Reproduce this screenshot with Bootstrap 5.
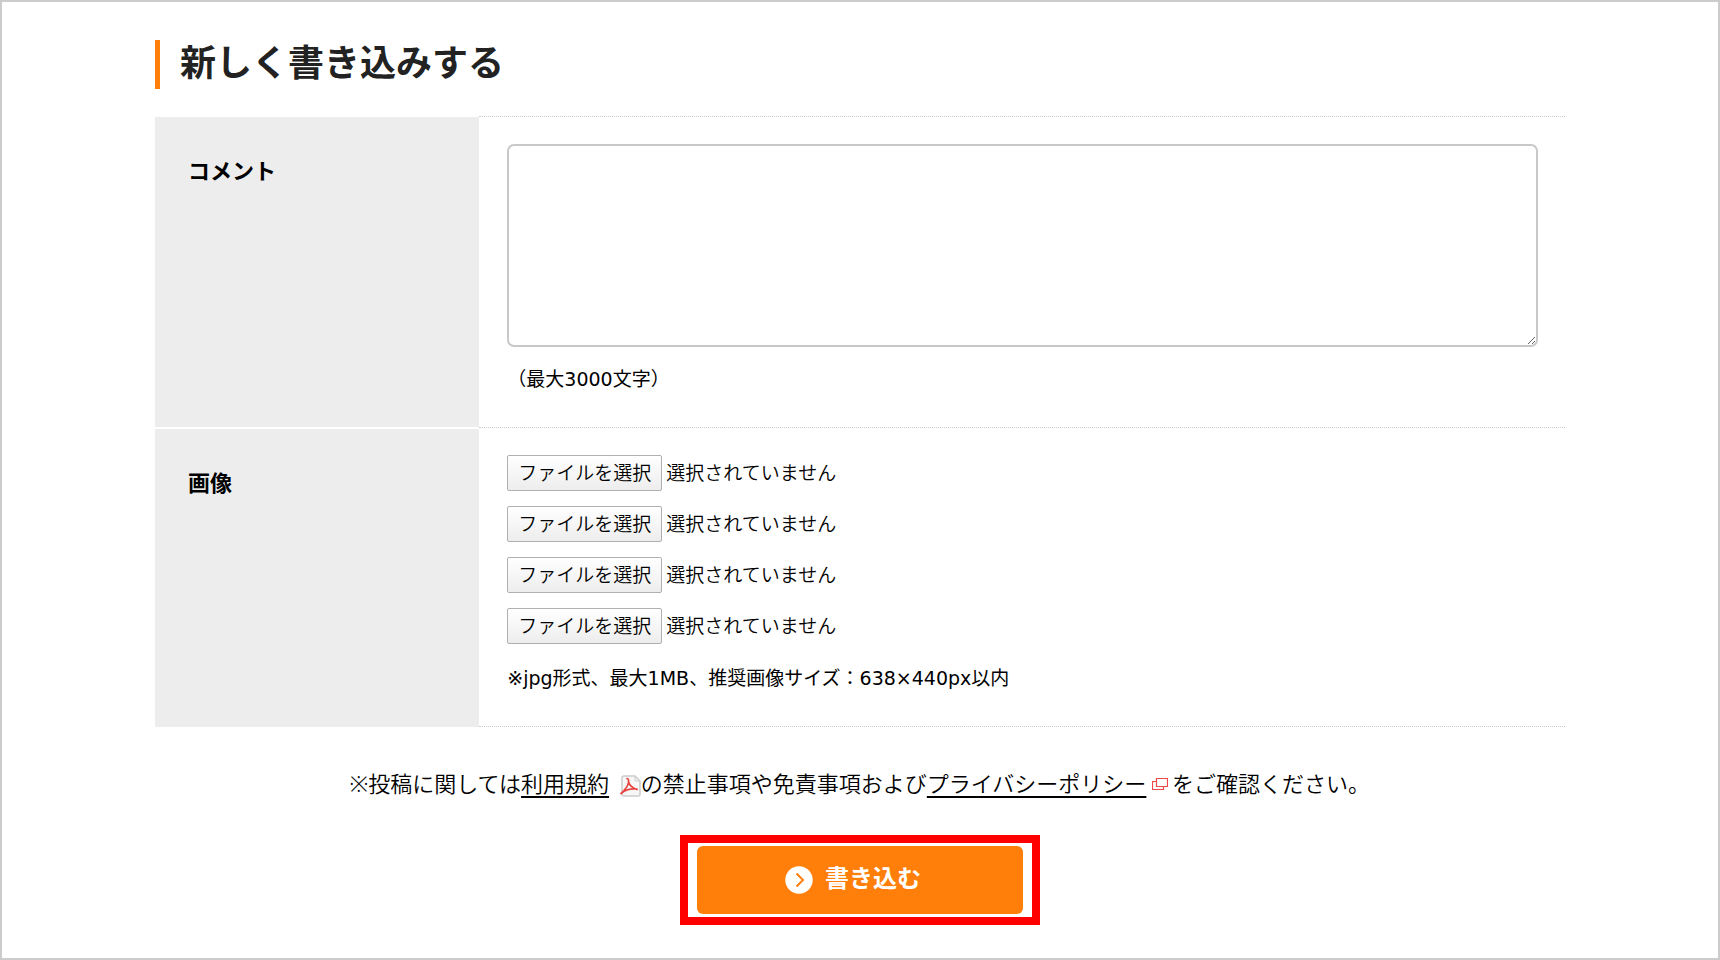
<!DOCTYPE html>
<html lang="ja">
<head>
<meta charset="utf-8">
<meta name="viewport" content="width=device-width, initial-scale=1">
<title>新しく書き込みする</title>
<link href="https://cdn.jsdelivr.net/npm/bootstrap@5.3.0/dist/css/bootstrap.min.css" rel="stylesheet">
<style>
  body {
    font-family: "Noto Sans", "Noto Sans CJK JP", sans-serif;
    font-size: 22px;
    font-weight: 350;
    line-height: 32px;
    color: #000;
    background: #fff;
    border: 2px solid #ccc;
  }
  .page-body { max-width: 1410px; padding-top: 38px; padding-bottom: 32px; }
  .page-title {
    font-size: 36px;
    line-height: 46px;
    color: #222;
    border-left: 5px solid #ff7f0a;
    padding: 0 0 3px 20px;
    margin-bottom: 27px;
  }
  .post-form th, .post-form td { vertical-align: top; }
  .post-form th {
    width: 23%;
    padding: 37px 33px;
    background: #ededed;
    border-bottom: 2px solid #fff;
  }
  .post-form tr:last-child th { border-bottom: 0; }
  .post-form td {
    padding: 27px 27px 32px 28px;
    border-top: 1px dotted #ccc;
    font-size: 19px;
  }
  .post-form tr:last-child td { border-bottom: 1px dotted #ccc; }
  .field-note { font-family: "DejaVu Sans", "Noto Sans CJK JP", sans-serif; font-weight: 400; }
  .comment-box { height: 203px; border: 2px solid #c8c8c8; border-radius: 7px; }
  .comment-box:focus { border-color: #999; box-shadow: none; }
  .file-list { gap: 15px; margin-bottom: 18px; }
  .pick-btn {
    font-size: 19px;
    line-height: 34px;
    padding: 0 10px;
    border: 1px solid #b0b0b0;
    border-radius: 2px;
    background: linear-gradient(#fff, #ededed);
  }
  .terms { margin: 40px 0 36px; }
  .terms a { color: #000; text-decoration-thickness: 2px; text-underline-offset: 4px; }
  .submit-frame { border: 8px solid #f00; padding: 3px 9px; }
  .submit-btn {
    width: 326px;
    height: 68px;
    gap: 12px;
    padding: 0 14px 0 0;
    font-size: 24px;
    background: #ff7f0a;
    border-radius: 6px;
    border: 0;
  }
  .submit-btn:hover { background: #e87000; }
</style>
</head>
<body class="min-vh-100">
<main class="page-body mx-auto">
  <h1 class="page-title fw-bold">新しく書き込みする</h1>

  <form>
    <table class="post-form w-100">
      <tbody>
        <tr>
          <th scope="row"><label for="comment">コメント</label></th>
          <td>
            <textarea id="comment" class="comment-box form-control" maxlength="3000"></textarea>
            <p class="field-note mt-3 mb-0">（最大3000文字）</p>
          </td>
        </tr>
        <tr>
          <th scope="row">画像</th>
          <td>
            <div class="file-list d-grid">
              <div class="d-flex align-items-center gap-1">
                <div class="position-relative">
                  <label class="pick-btn d-block" for="image1">ファイルを選択</label>
                  <input class="position-absolute top-0 start-0 w-100 h-100 opacity-0" type="file" id="image1" accept="image/jpeg">
                </div>
                <span>選択されていません</span>
              </div>
              <div class="d-flex align-items-center gap-1">
                <div class="position-relative">
                  <label class="pick-btn d-block" for="image2">ファイルを選択</label>
                  <input class="position-absolute top-0 start-0 w-100 h-100 opacity-0" type="file" id="image2" accept="image/jpeg">
                </div>
                <span>選択されていません</span>
              </div>
              <div class="d-flex align-items-center gap-1">
                <div class="position-relative">
                  <label class="pick-btn d-block" for="image3">ファイルを選択</label>
                  <input class="position-absolute top-0 start-0 w-100 h-100 opacity-0" type="file" id="image3" accept="image/jpeg">
                </div>
                <span>選択されていません</span>
              </div>
              <div class="d-flex align-items-center gap-1">
                <div class="position-relative">
                  <label class="pick-btn d-block" for="image4">ファイルを選択</label>
                  <input class="position-absolute top-0 start-0 w-100 h-100 opacity-0" type="file" id="image4" accept="image/jpeg">
                </div>
                <span>選択されていません</span>
              </div>
            </div>
            <p class="field-note mb-0">※jpg形式、最大1MB、推奨画像サイズ：638×440px以内</p>
          </td>
        </tr>
      </tbody>
    </table>

    <p class="terms text-center">※投稿に関しては<a href="#terms">利用規約</a>
      <svg class="ms-1" width="22" height="22" viewBox="0 0 22 22" aria-hidden="true"><path d="M5 1h11l5 5v13q0 2-2 2H5q-2 0-2-2V3q0-2 2-2z" fill="#f7f7f7" stroke="#ccc" stroke-width="1.5"/><path d="M16 1v5h5" fill="none" stroke="#ccc"/><path d="M8 3.500q2 0 1.500 4Q9 12 2 18.500M9.500 7Q11 12 18 14.500M2 18.500Q8 13 18 14" fill="none" stroke="#e8423f" stroke-width="1.700" stroke-linecap="round"/></svg>の禁止事項や免責事項および<a href="#privacy">プライバシーポリシー</a>
      <svg class="me-1 mb-1" width="16" height="14" viewBox="0 0 16 14" aria-hidden="true"><path d="M4.500 1.500h11v8h-11zM4.500 4.500h-4v8h11v-3" fill="none" stroke="#f0474b" stroke-width="1.200"/></svg>をご確認ください。</p>

    <div class="d-flex justify-content-center">
      <div class="submit-frame">
        <button type="submit" class="submit-btn d-flex align-items-center justify-content-center text-white fw-bold">
          <svg width="28" height="28" viewBox="0 0 28 28" aria-hidden="true"><circle cx="14" cy="14" r="13.700" fill="#fff"/><path d="M11.500 7.500l6.500 6.500-6.500 6.500" fill="none" stroke="#ff7f0a" stroke-width="2"/></svg>
          <span class="pb-1">書き込む</span>
        </button>
      </div>
    </div>
  </form>
</main>
<script src="https://cdn.jsdelivr.net/npm/bootstrap@5.3.0/dist/js/bootstrap.bundle.min.js"></script>
</body>
</html>
